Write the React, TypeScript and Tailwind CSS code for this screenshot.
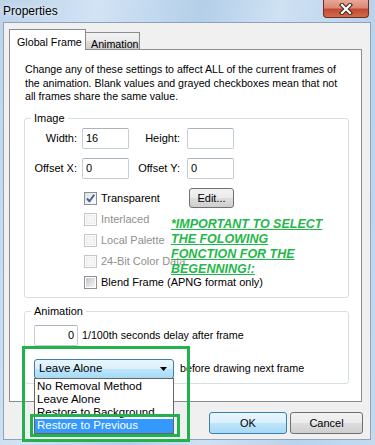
import React from 'react';

const labelFont = "font-['Liberation_Sans',Arial,sans-serif]";

const TextBox = ({ value = '', width, right = false }: { value?: string; width: string; right?: boolean }) => (
  <div
    className={`flex h-[21px] ${width} items-center rounded-[2px] border border-[#c4ccd5] border-t-[#abb3bd] bg-white px-[3px] ${right ? 'justify-end' : ''}`}
  >
    {value}
  </div>
);

const CheckBox = ({ label, checked = false, disabled = false }: { label: string; checked?: boolean; disabled?: boolean }) => (
  <div className="flex h-[21px] items-center">
    <span
      className={`flex h-[13px] w-[13px] shrink-0 items-center justify-center border ${
        disabled ? 'border-[#c6c6c6] bg-[#fbfbfb]' : 'border-[#8e8f8f] bg-white'
      }`}
    >
      {checked ? (
        <span className="flex h-[11px] w-[11px] items-center justify-center bg-gradient-to-br from-[#dde1e6] to-[#fbfbfb]">
          <svg width="11" height="11" viewBox="0 0 11 11">
            <path d="M2 5.5 L4.5 8.3 L9.2 1.8" fill="none" stroke="#4a5c8e" strokeWidth="1.9" strokeLinejoin="round" />
          </svg>
        </span>
      ) : disabled ? (
        <span className="h-[9px] w-[9px] border border-[#ececec] bg-[#f5f5f5]" />
      ) : (
        <span className="h-[9px] w-[9px] bg-gradient-to-br from-[#c2c6cc] to-[#f4f4f4]" />
      )}
    </span>
    <span className={`ml-[4px] whitespace-nowrap ${disabled ? 'text-[#8f8f8f]' : 'text-black'}`}>{label}</span>
  </div>
);

const WinButton = ({ children, width, height, primary = false }: { children: React.ReactNode; width: string; height: string; primary?: boolean }) => (
  <div
    className={`flex ${width} ${height} items-center justify-center rounded-[3px] border ${
      primary
        ? 'border-[#3c7fb1] bg-[linear-gradient(#eaf6fd_0%,#d9f0fc_50%,#bee6fd_51%,#a7d9f5_100%)]'
        : 'border-[#707070] bg-[linear-gradient(#f2f2f2_0%,#ebebeb_50%,#dddddd_51%,#cfcfcf_100%)]'
    }`}
  >
    <span className="leading-none">{children}</span>
  </div>
);

const GroupBox = ({ title, className, children }: { title: string; className: string; children: React.ReactNode }) => (
  <div className={`relative rounded-[3px] border border-[#d5dfe5] ${className}`}>
    <span className="absolute -top-[8px] left-[6px] bg-white px-[3px] leading-[14px]">{title}</span>
    {children}
  </div>
);

export default function App() {
  return (
    <div
      className={`relative h-[445px] w-[375px] overflow-hidden bg-[linear-gradient(100deg,#bcd3ea_0%,#d2e3f4_22%,#b4cfe9_45%,#cfe1f3_62%,#bad3eb_82%,#c5daee_100%)] text-[11px] text-black ${labelFont}`}
    >
      {/* title bar */}
      <div className="flex h-[22px] items-start justify-between">
        <span className="pl-[3px] pt-[4px] text-[12px] leading-[14px] [text-shadow:0_0_5px_#ffffff]">Properties</span>
        <div className="mr-[6px] flex h-[18px] w-[46px] items-center justify-center rounded-b-[4px] border border-t-0 border-[#6b2e25] bg-[linear-gradient(#e9a796_0%,#d98a75_45%,#c24a32_55%,#d46a4c_100%)]">
          <svg width="14" height="12" viewBox="0 0 14 12">
            <path d="M3 2 L11 10 M11 2 L3 10" stroke="#3b2520" strokeWidth="4.2" strokeLinecap="square" />
            <path d="M3 2 L11 10 M11 2 L3 10" stroke="#ffffff" strokeWidth="2.2" strokeLinecap="square" />
          </svg>
        </div>
      </div>

      {/* dialog body */}
      <div className="ml-[3px] flex h-[418px] w-[368px] flex-col border border-[#8ea2b9] bg-[#f0f0f0]">
        {/* tabs */}
        <div className="relative z-10 ml-[5px] mt-[6px] flex items-end">
          <div className="flex h-[21px] w-[77px] items-start border border-b-0 border-[#898c95] bg-white pl-[7px] pt-[4px] text-[10.7px]">
            Global Frame
          </div>
          <div className="-ml-px mb-[1px] flex h-[17px] w-[55px] items-start border border-b-0 border-[#898c95] bg-[linear-gradient(#f2f2f2_0%,#ebebeb_50%,#dddddd_51%,#cfcfcf_100%)] pl-[5px] pt-[3px] text-[10.7px]">
            Animation
          </div>
        </div>

        {/* tab panel */}
        <div className="-mt-px ml-[5px] flex h-[353px] w-[353px] flex-col border border-[#898c95] bg-white">
          <div className="pl-[15px] pt-[13px] text-[10.6px] leading-[13.5px]">
            <div className="whitespace-nowrap">Change any of these settings to affect ALL of the current frames of</div>
            <div className="whitespace-nowrap">the animation. Blank values and grayed checkboxes mean that not</div>
            <div className="whitespace-nowrap">all frames share the same value.</div>
          </div>

          <GroupBox title="Image" className="ml-[14px] mt-[14px] h-[180px] w-[325px] pt-[9px]">
            <div className="flex h-[21px] items-center">
              <span className="w-[52px] text-right">Width:</span>
              <div className="ml-[5px]">
                <TextBox value="16" width="w-[47px]" />
              </div>
              <span className="w-[51px] text-right">Height:</span>
              <div className="ml-[7px]">
                <TextBox width="w-[47px]" />
              </div>
            </div>
            <div className="mt-[9px] flex h-[21px] items-center">
              <span className="w-[52px] text-right">Offset X:</span>
              <div className="ml-[5px]">
                <TextBox value="0" width="w-[47px]" />
              </div>
              <span className="w-[51px] text-right">Offset Y:</span>
              <div className="ml-[7px]">
                <TextBox value="0" width="w-[47px]" />
              </div>
            </div>
            <div className="mt-[9px] flex flex-col pl-[59px]">
              <div className="flex items-center">
                <div className="w-[105px]">
                  <CheckBox label="Transparent" checked />
                </div>
                <WinButton width="w-[45px]" height="h-[20px]">Edit...</WinButton>
              </div>
              <CheckBox label="Interlaced" disabled />
              <CheckBox label="Local Palette" disabled />
              <CheckBox label="24-Bit Color Data" disabled />
              <CheckBox label="Blend Frame (APNG format only)" />
            </div>
          </GroupBox>

          <GroupBox title="Animation" className="ml-[14px] mt-[13px] h-[73px] w-[325px] pl-[9px] pt-[13px]">
            <div className="flex items-center">
              <TextBox value="0" width="w-[44px]" right />
              <span className="ml-[4px] text-[10.7px]">1/100th seconds delay after frame</span>
            </div>
            <div className="mt-[13px] flex items-center">
              <div className="relative">
                <div className="flex h-[20px] w-[140px] items-center justify-between rounded-[3px] border border-[#3c7fb1] bg-[linear-gradient(#eaf6fd_0%,#d9f0fc_50%,#bee6fd_51%,#a7d9f5_100%)] pl-[4px] pr-[6px]">
                  <span className="text-[11.5px]">Leave Alone</span>
                  <svg width="7" height="4" viewBox="0 0 7 4">
                    <path d="M0 0 H7 L3.5 4 Z" fill="#000" />
                  </svg>
                </div>
                {/* open list */}
                <div className="absolute left-0 top-[19px] z-20 flex h-[56px] w-[140px] flex-col border border-[#646464] bg-white pt-[1px] text-[11.5px] leading-[13px]">
                  <div className="h-[13px] whitespace-nowrap pl-[2px]">No Removal Method</div>
                  <div className="h-[13px] whitespace-nowrap pl-[2px]">Leave Alone</div>
                  <div className="h-[13px] whitespace-nowrap pl-[2px]">Restore to Background</div>
                  <div className="h-[14px] whitespace-nowrap bg-[#3399ff] pl-[2px] text-white">Restore to Previous</div>
                </div>
              </div>
              <span className="ml-[6px] text-[10.7px]">before drawing next frame</span>
            </div>
          </GroupBox>
        </div>

        {/* buttons */}
        <div className="mr-[7px] mt-[10px] flex justify-end gap-[3px]">
          <WinButton width="w-[78px]" height="h-[22px]" primary>
            OK
          </WinButton>
          <WinButton width="w-[73px]" height="h-[22px]">Cancel</WinButton>
        </div>
      </div>

      {/* annotation note */}
      <div className="absolute left-[171px] top-[217px] z-30 w-[152px] overflow-hidden text-[12.5px] font-bold italic leading-[15px] text-[#1fb84a] underline">
        <div className="whitespace-nowrap">*IMPORTANT TO SELECT</div>
        <div className="whitespace-nowrap">THE FOLOWING</div>
        <div className="whitespace-nowrap">FONCTION FOR THE</div>
        <div className="whitespace-nowrap">BEGENNING!:</div>
      </div>

      {/* annotation frames */}
      <div className="pointer-events-none absolute left-[22px] top-[346px] z-30 h-[96px] w-[168px] border-[3px] border-[#22b14c]" />
      <div className="pointer-events-none absolute left-[30px] top-[414px] z-30 h-[23px] w-[150px] border-[3px] border-[#22b14c]" />
    </div>
  );
}
